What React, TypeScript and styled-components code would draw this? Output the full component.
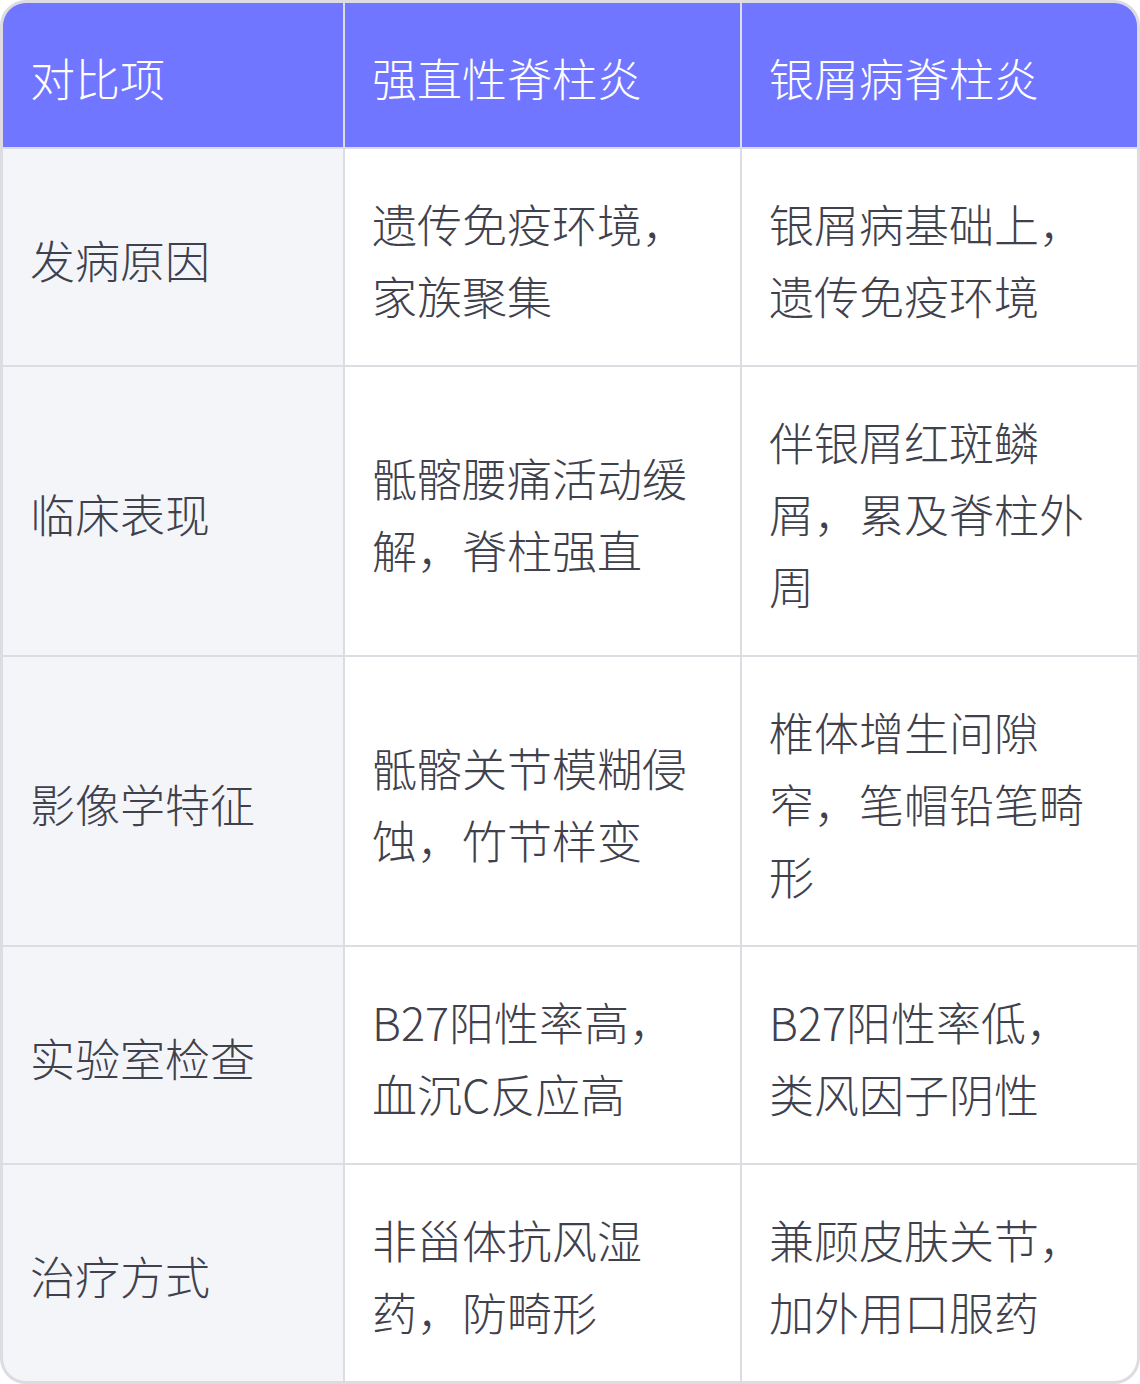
import React from 'react';
import styled, { createGlobalStyle } from 'styled-components';

const GlobalStyle = createGlobalStyle`
  html, body {
    margin: 0;
    padding: 0;
    background: #ffffff;
  }
  body {
    font-family: "Noto Sans CJK SC Light", "Noto Sans CJK SC DemiLight", "Noto Sans CJK SC", "Noto Sans", sans-serif;
  }
`;

const Table = styled.div`
  box-sizing: border-box;
  width: 1140px;
  display: grid;
  grid-template-columns: 340px 395px 395px;
  gap: 2px;
  border: 3px solid #dcdce2;
  border-radius: 26px;
  overflow: hidden;
  background: #dcdce2;
`;

const Cell = styled.div<{ $head?: boolean; $label?: boolean }>`
  display: flex;
  align-items: center;
  padding: 39px 27px 33px;
  font-size: 45px;
  line-height: 72px;
  font-weight: 200;
  color: ${(p) => (p.$head ? '#ffffff' : '#3f414c')};
  background: ${(p) => (p.$head ? '#7076ff' : p.$label ? '#f4f5f9' : '#ffffff')};
`;

const head = ['对比项', '强直性脊柱炎', '银屑病脊柱炎'];

const rows: [string, string, string][] = [
  ['发病原因', '遗传免疫环境，家族聚集', '银屑病基础上，遗传免疫环境'],
  ['临床表现', '骶髂腰痛活动缓解，脊柱强直', '伴银屑红斑鳞屑，累及脊柱外周'],
  ['影像学特征', '骶髂关节模糊侵蚀，竹节样变', '椎体增生间隙窄，笔帽铅笔畸形'],
  ['实验室检查', 'B27阳性率高，血沉C反应高', 'B27阳性率低，类风因子阴性'],
  ['治疗方式', '非甾体抗风湿药，防畸形', '兼顾皮肤关节，加外用口服药'],
];

const App: React.FC = () => (
  <>
    <GlobalStyle />
    <Table lang="zh-CN">
      {head.map((h) => (
        <Cell key={h} $head>
          {h}
        </Cell>
      ))}
      {rows.map(([label, as, ps]) => (
        <React.Fragment key={label}>
          <Cell $label>{label}</Cell>
          <Cell>{as}</Cell>
          <Cell>{ps}</Cell>
        </React.Fragment>
      ))}
    </Table>
  </>
);

export default App;
